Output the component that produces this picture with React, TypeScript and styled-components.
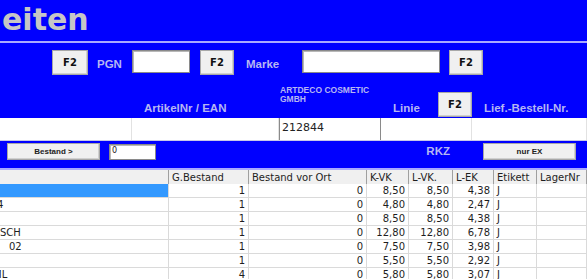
import React from 'react';
import styled, { createGlobalStyle } from 'styled-components';

const GlobalStyle = createGlobalStyle`
    html, body {
        margin: 0;
        padding: 0;
        background: #ffffff;
    }
    body {
        font-family: "DejaVu Sans", sans-serif;
    }
`;

const Screen = styled.div`
    width: 587px;
    height: 279px;
    overflow: hidden;
    background: #ffffff;
`;

const Head = styled.div`
    background: #0000ff;
`;

const TitleBar = styled.div`
    height: 43px;
    box-sizing: border-box;
    padding: 2px 0 0 2px;
    font: bold 30px/35px "DejaVu Sans", sans-serif;
    color: #c6c6c6;
    white-space: nowrap;
    border-bottom: 2px solid #a9a9ff;
`;

const SearchRow = styled.div`
    display: flex;
    align-items: flex-start;
    height: 41px;
    box-sizing: border-box;
    padding: 7px 0 0 52px;
`;

const FKey = styled.button<{ $w?: number }>`
    width: ${p => p.$w ?? 34}px;
    height: 25px;
    box-sizing: border-box;
    padding: 0;
    background: #f0f0f0;
    border: 1px solid #a8a8a8;
    box-shadow: inset -1px -1px 0 #d0d0d0;
    font: bold 10px "DejaVu Sans", sans-serif;
    color: #111111;
`;

const Caption = styled.span<{ $w: number; $pad: number; $top?: number }>`
    width: ${p => p.$w}px;
    box-sizing: border-box;
    padding-left: ${p => p.$pad}px;
    padding-top: ${p => p.$top ?? 8}px;
    font: bold 11.5px "Liberation Sans", sans-serif;
    color: #b6b6f2;
    white-space: nowrap;
`;

const Field = styled.input<{ $w: number }>`
    width: ${p => p.$w}px;
    height: 23px;
    box-sizing: border-box;
    margin: 0;
    background: #ffffff;
    border: 1px solid #8a8a8a;
    box-shadow: inset 1px 1px 0 #b8b8b8;
    outline: none;
`;

const Spacer = styled.div<{ $w: number }>`
    width: ${p => p.$w}px;
    flex: none;
`;

const LabelRow = styled.div`
    display: grid;
    grid-template-columns: 132px 147px 102px 91px 1fr;
    height: 34px;
`;

const ColLabel = styled.div`
    align-self: end;
    padding: 0 0 4px 12px;
    font: bold 11.5px "Liberation Sans", sans-serif;
    color: #b6b6f2;
    white-space: nowrap;
`;

const Maker = styled.div`
    padding: 2px 0 0 1px;
    font: bold 8.5px/9px "Liberation Sans", sans-serif;
    color: #b6b6f2;
`;

const LineCell = styled.div`
    display: flex;
    align-items: flex-end;
    justify-content: space-between;
    padding: 0 0 1px 12px;
`;

const LineLabel = styled.span`
    padding-bottom: 3px;
    font: bold 11.5px "Liberation Sans", sans-serif;
    color: #b6b6f2;
`;

const EntryRow = styled.div`
    display: grid;
    grid-template-columns: 132px 147px 102px 91px 1fr;
    height: 23px;
    background: #ffffff;
    border-bottom: 1px solid #c8c8e8;
    box-sizing: border-box;
`;

const EntryCell = styled.div<{ $framed?: boolean }>`
    box-sizing: border-box;
    border-right: 1px solid ${p => (p.$framed ? '#8a8a8a' : '#e2e2e2')};
    border-left: ${p => (p.$framed ? '1px solid #8a8a8a' : 'none')};
    padding: 3px 0 0 2px;
    font: 11px "DejaVu Sans", sans-serif;
    color: #222222;
`;

const ActionRow = styled.div`
    display: flex;
    align-items: flex-start;
    height: 29px;
    box-sizing: border-box;
    padding: 2px 11px 0 7px;
    border-bottom: 2px solid #a9a9ff;
`;

const SmallButton = styled.button`
    width: 93px;
    height: 17px;
    box-sizing: border-box;
    padding: 0;
    background: #f0f0f0;
    border: 1px solid #a8a8a8;
    box-shadow: inset -1px -1px 0 #d0d0d0;
    font: bold 8px "Liberation Sans", sans-serif;
    color: #222222;
`;

const SmallField = styled.div`
    width: 47px;
    height: 16px;
    margin: 1px 0 0 9px;
    box-sizing: border-box;
    background: #ffffff;
    border: 1px solid #8a8a8a;
    box-shadow: inset 1px 1px 0 #b8b8b8;
    padding: 1px 0 0 2px;
    font: 8px "DejaVu Sans", sans-serif;
    color: #222222;
`;

const Rkz = styled.span`
    margin: 2px 33px 0 auto;
    font: bold 11.5px "Liberation Sans", sans-serif;
    color: #b6b6f2;
`;

const Grid = styled.div`
    display: grid;
    grid-template-columns: 169px 80px 118px 42px 44px 41px 43px 1fr;
    grid-auto-rows: 14px;
    font: 10px/14px "DejaVu Sans", sans-serif;
    color: #1e1e1e;
`;

const HeadCell = styled.div`
    height: 16px;
    box-sizing: border-box;
    padding: 1px 0 0 3px;
    background: #f0f0f0;
    border-right: 1px solid #a0a0a0;
    border-bottom: 1px solid #a0a0a0;
    line-height: 14px;
    white-space: nowrap;
    overflow: hidden;
`;

const Cell = styled.div<{ $num?: boolean; $sel?: boolean }>`
    box-sizing: border-box;
    padding: 0 3px;
    text-align: ${p => (p.$num ? 'right' : 'left')};
    background: ${p => (p.$sel ? '#3399ff' : '#ffffff')};
    border-right: 1px solid #dadada;
    border-bottom: 1px solid #dadada;
    white-space: nowrap;
    overflow: hidden;
`;

const NameCell = styled(Cell)`
    padding: 0;
`;

const NameText = styled.span<{ $shift: number }>`
    display: inline-block;
    margin-left: ${p => p.$shift}px;
`;

const headers = ['', 'G.Bestand', 'Bestand vor Ort', 'K-VK', 'L-VK.', 'L-EK', 'Etikett', 'LagerNr'];

const rows = [
    { name: '', shift: 0, g: '1', ort: '0', kvk: '8,50', lvk: '8,50', lek: '4,38' },
    { name: '4', shift: -3, g: '1', ort: '0', kvk: '4,80', lvk: '4,80', lek: '2,47' },
    { name: '', shift: 0, g: '1', ort: '0', kvk: '8,50', lvk: '8,50', lek: '4,38' },
    { name: 'SCH', shift: 0, g: '1', ort: '0', kvk: '12,80', lvk: '12,80', lek: '6,78' },
    { name: '02', shift: 9, g: '1', ort: '0', kvk: '7,50', lvk: '7,50', lek: '3,98' },
    { name: '', shift: 0, g: '1', ort: '0', kvk: '5,50', lvk: '5,50', lek: '2,92' },
    { name: 'ML', shift: -7, g: '4', ort: '0', kvk: '5,80', lvk: '5,80', lek: '3,07' },
];

const App: React.FC = () => {
    return (
        <Screen>
            <GlobalStyle />
            <Head>
                <TitleBar>eiten</TitleBar>
                <SearchRow>
                    <FKey $w={36}>F2</FKey>
                    <Caption $w={44} $pad={9}>PGN</Caption>
                    <Field $w={58} />
                    <Spacer $w={10} />
                    <FKey>F2</FKey>
                    <Caption $w={68} $pad={12}>Marke</Caption>
                    <Field $w={138} />
                    <Spacer $w={9} />
                    <FKey>F2</FKey>
                </SearchRow>
                <LabelRow>
                    <div />
                    <ColLabel>ArtikelNr / EAN</ColLabel>
                    <Maker>ARTDECO COSMETIC GMBH</Maker>
                    <LineCell>
                        <LineLabel>Linie</LineLabel>
                        <FKey>F2</FKey>
                    </LineCell>
                    <ColLabel>Lief.-Bestell-Nr.</ColLabel>
                </LabelRow>
                <EntryRow>
                    <EntryCell />
                    <EntryCell />
                    <EntryCell $framed>212844</EntryCell>
                    <EntryCell />
                    <EntryCell />
                </EntryRow>
                <ActionRow>
                    <SmallButton>Bestand &gt;</SmallButton>
                    <SmallField>0</SmallField>
                    <Rkz>RKZ</Rkz>
                    <SmallButton>nur EX</SmallButton>
                </ActionRow>
            </Head>
            <Grid>
                {headers.map((h, i) => (
                    <HeadCell key={i}>{h}</HeadCell>
                ))}
                {rows.map((r, i) => (
                    <React.Fragment key={i}>
                        <NameCell $sel={i === 0}>
                            <NameText $shift={r.shift}>{r.name}</NameText>
                        </NameCell>
                        <Cell $num>{r.g}</Cell>
                        <Cell $num>{r.ort}</Cell>
                        <Cell $num>{r.kvk}</Cell>
                        <Cell $num>{r.lvk}</Cell>
                        <Cell $num>{r.lek}</Cell>
                        <Cell>J</Cell>
                        <Cell />
                    </React.Fragment>
                ))}
            </Grid>
        </Screen>
    );
};

export default App;
